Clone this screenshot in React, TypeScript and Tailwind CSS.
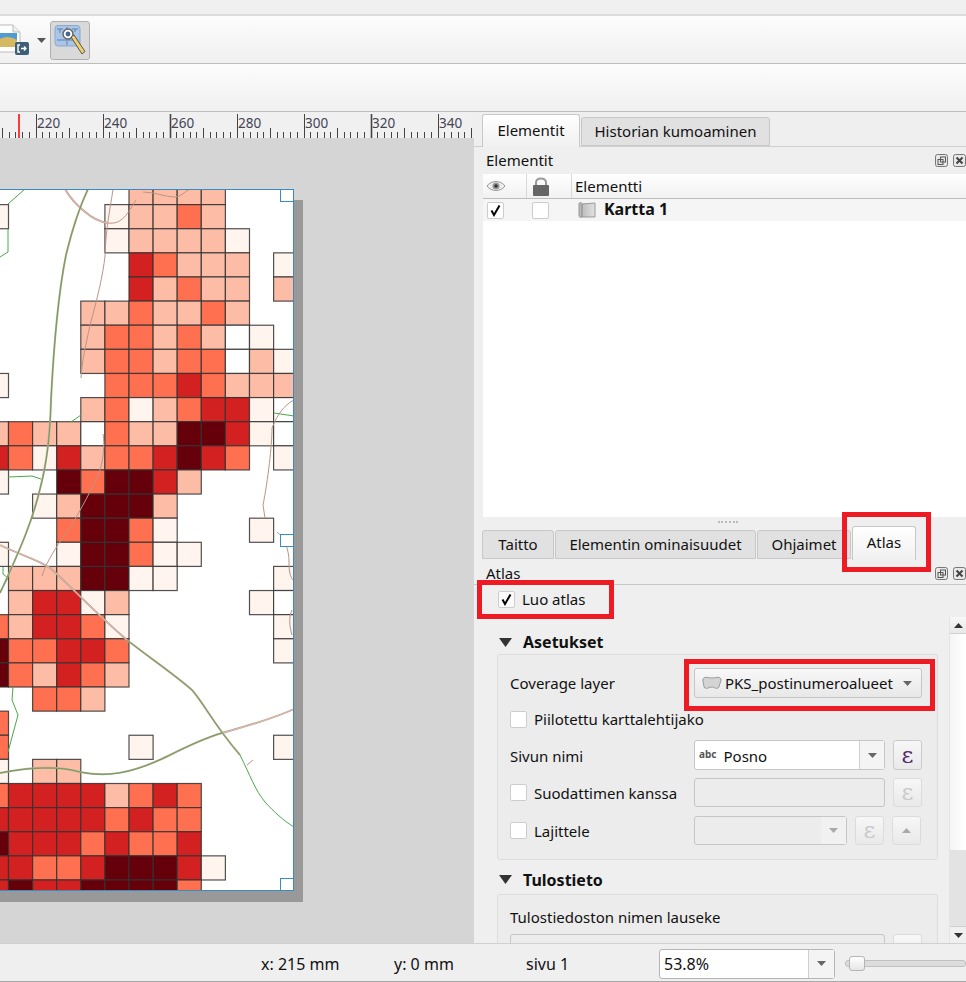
import React from "react";

const rows = [
  "......PPPP...",
  "L....LPPOP...",
  ".....LPPPPL..",
  "......ROPPP.L",
  "......RPOPP.P",
  "....PPOPPOP..",
  "....POOPOPWL.",
  "....POOPOOWPL",
  "L....OOOROPPP",
  "....POLPORRLW",
  "POPPWOPPDDRLW",
  "ROLRPOORDRO.L",
  "L..DODDRP....",
  "..LPDDDP.....",
  "...ODDOL...L.",
  "L..LDDOLL....",
  ".PPPDDLL....L",
  ".PRRLP.....LW",
  "OPRROL......L",
  "DOORRO......L",
  "DOPROP.......",
  "..OOP........",
  "O............",
  "O.....L.....L",
  "L.PP.........",
  "ORRRRPORO....",
  "RRRRROROO....",
  "DRRROROOR....",
  "RROORDDDRL...",
  "RDRRDDDDO....",
];
const fills: Record<string, string> = { W: "#ffffff", L: "#fff4ee", P: "#fdbca6", O: "#fe7050", R: "#d32020", D: "#65000b" };

const mainNS = "M88 189C80 206 72 230 66 255C59 290 54 340 51 400C50 440 46 465 41 485C33 520 20 550 0 593";
const diagGreen = "M127 640C150 658 175 675 192 690C205 705 214 725 240 755";
const curveWest = "M0 773C30 767 60 766 80 772C105 777 130 775 170 755C190 745 205 738 222 733";
const greens = [
  "M25 189L8 204",
  "M8 229L8 252L0 257",
  "M71 422L81 415",
  "M8 477L32 476L41 479",
  "M3 567L3 574L8 578L0 592",
  "M13 687L12 700L18 715L8 752",
  "M240 755C250 775 255 790 265 802C274 812 284 821 294 827",
  "M274 413L294 416",
];
const doubles = [
  "M65 189C70 198 78 206 84 211C92 218 100 222 108 223",
  "M0 545C20 555 40 560 50 568C70 585 90 608 127 640",
  "M222 733C240 728 270 720 294 709",
];
const browns = [
  "M108 223C122 225 128 213 136 200",
  "M113 189C111 205 106 225 105 256C103 275 97 300 90 325C86 345 82 360 81 378",
  "M143 192C155 192 165 197 175 197C180 197 186 191 190 189",
  "M103 434C105 445 103 460 100 470C92 490 80 510 72 525C65 535 57 545 50 558C46 565 44 570 42 576",
  "M247 765L253 760",
  "M294 400C284 405 277 415 272 428C272 445 268 480 263 505L265 518",
  "M277 532C285 538 289 550 289 562C289 572 290 576 293 580",
  "M292 610C289 616 289 625 292 635",
];

function Cb({ checked, white }: { checked?: boolean; white?: boolean }) {
  return (
    <span className={`w-[17px] h-[17px] shrink-0 flex items-center justify-center border border-[#cdcdcd] rounded-[2px] ${white ? "bg-white" : "bg-[#fafafa]"}`}>
      {checked && (
        <svg width="13" height="13" viewBox="0 0 13 13">
          <path d="M2.5 6.5L5 11L10.5 1.5" fill="none" stroke="#000" strokeWidth="2" />
        </svg>
      )}
    </span>
  );
}
function Arrow({ up, color = "#666" }: { up?: boolean; color?: string }) {
  return (
    <svg width="9" height="5" viewBox="0 0 9 5" className="shrink-0">
      <path d={up ? "M0 5L4.5 0L9 5Z" : "M0 0L9 0L4.5 5Z"} fill={color} />
    </svg>
  );
}
function Eps({ disabled }: { disabled?: boolean }) {
  return (
    <span className={`h-full w-[29px] shrink-0 flex items-center justify-center rounded-[3px] border bg-gradient-to-b from-[#f7f7f7] to-[#e9e9e9] text-[23px] leading-none font-['DejaVu_Serif',serif] ${disabled ? "text-[#c9c9c9] border-[#dcdcdc]" : "text-[#552c6e] border-[#cbcbcb]"}`}>
      ε
    </span>
  );
}
function Triangle() {
  return (
    <svg width="13" height="9" viewBox="0 0 13 9" className="shrink-0">
      <path d="M0 0L13 0L6.5 9Z" fill="#333" />
    </svg>
  );
}
function Close() {
  return (
    <span className="flex gap-[5px]">
      <svg width="13" height="13" viewBox="0 0 13 13">
        <rect x="0.5" y="0.5" width="12" height="12" rx="2" fill="#e8e8e8" stroke="#777" />
        <rect x="3" y="5.5" width="5" height="5" fill="none" stroke="#555" />
        <rect x="5.5" y="3" width="5" height="5" fill="none" stroke="#555" />
      </svg>
      <svg width="13" height="13" viewBox="0 0 13 13">
        <rect x="0.5" y="0.5" width="12" height="12" rx="2" fill="#e8e8e8" stroke="#777" />
        <path d="M3.5 3.5L9.5 9.5M9.5 3.5L3.5 9.5" stroke="#444" strokeWidth="2" />
      </svg>
    </span>
  );
}
function LayerIcon() {
  return (
    <svg width="20" height="14" viewBox="0 0 20 14" className="shrink-0">
      <path d="M1 3C3 0 7 2 10 2C13 2 17 0 19 3C19.5 6 17 8 17 11C15 14 12 11 10 11C7 11 4 14 2 11C2 8 0.5 6 1 3Z" fill="#d4d4d4" stroke="#999" />
    </svg>
  );
}
function Ruler() {
  const ticks: React.ReactNode[] = [];
  for (let mm = 210; mm <= 350; mm += 2) {
    const x = Math.round(35.5 + (mm - 220) * 3.35) + 0.5;
    const major = mm % 20 === 0;
    const mid = mm % 10 === 0;
    const thick = mm === 260 || mm === 320;
    ticks.push(<line key={mm} x1={x} x2={x} y1={major ? 2 : mid ? 16 : 20} y2={26} stroke="#444" strokeWidth={thick ? 1.6 : 1} />);
  }
  return (
    <svg width="473" height="26" className="block">
      <rect width="473" height="26" fill="#f0f0f0" />
      {ticks}
      <line x1="19" x2="19" y1="2" y2="26" stroke="#f00" strokeWidth="1.5" />
      {[220, 240, 260, 280, 300, 320, 340].map((v) => (
        <text key={v} x={37 + (v - 220) * 3.35} y="16" fontSize="13.5" fill="#445" fontFamily="'Noto Sans',sans-serif">{v}</text>
      ))}
    </svg>
  );
}
function MapArt() {
  return (
    <svg width="294" height="702" viewBox="0 189 294 702" className="block ml-[20px]">
      {rows.map((row, r) =>
        row.split("").map((c, i) =>
          c === "." ? null : (
            <rect key={`${r}-${i}`} x={-15.6 + i * 24.1} y={180.5 + r * 24.12} width="24.1" height="24.12" fill={fills[c]} stroke="#333" strokeOpacity="0.85" strokeWidth="1.2" />
          )
        )
      )}
      {browns.map((d, i) => (
        <path key={i} d={d} fill="none" stroke="#bb9584" strokeWidth="1" />
      ))}
      {greens.map((d, i) => (
        <path key={i} d={d} fill="none" stroke="#4aa84a" strokeWidth="1" />
      ))}
      {doubles.map((d, i) => (
        <g key={i}>
          <path d={d} fill="none" stroke="#bd9a8a" strokeWidth="1.9" />
          <path d={d} fill="none" stroke="#f3e4dd" strokeWidth="0.5" />
        </g>
      ))}
      {[mainNS, diagGreen, curveWest].map((d, i) => (
        <g key={i}>
          <path d={d} fill="none" stroke="#c6a696" strokeWidth="2" />
          <path d={d} fill="none" stroke="#54a451" strokeWidth="0.9" />
        </g>
      ))}
    </svg>
  );
}
function Tab({ label, w, cls }: { label: string; w: string; cls?: string }) {
  return (
    <div className={`${w} flex items-center justify-center rounded-t-[3px] border border-[#c8c8c8] text-[#111] ${cls ?? "h-[29px] bg-[#e1e1e1]"}`}>
      {label}
    </div>
  );
}

export default function App() {
  return (
    <div className="w-[966px] h-[982px] overflow-hidden flex flex-col bg-[#efefef] text-[15px] text-[#111] font-['Noto_Sans',sans-serif]">
      <div className="h-[14px] bg-[#f0f0f0]" />
      <div className="h-[2px] bg-[#dcdcdc]" />
      <div className="h-[48px] bg-gradient-to-b from-[#fcfcfc] to-[#f0f0f0] border-b border-[#bdbdbd] flex items-center overflow-hidden">
        <svg width="32" height="34" viewBox="0 0 32 34" className="shrink-0 mt-[2px]">
          <path d="M-6 1H13L20 8V28H-6Z" fill="#fff" stroke="#bbb" />
          <path d="M13 1V8H20" fill="#eee" stroke="#bbb" />
          <rect x="-4" y="9" width="21" height="14" fill="#4f9bd4" />
          <path d="M-4 17C3 12 10 12 17 16V23H-4Z" fill="#d6b762" />
          <rect x="15" y="18" width="14" height="13" rx="2" fill="#3f5f78" />
          <path d="M20 21H18V28H20M21 24.500H26M24 22.500L26 24.500L24 26.500" fill="none" stroke="#fff" strokeWidth="1.4" />
        </svg>
        <svg width="9" height="5" viewBox="0 0 9 5" className="ml-[5px] mt-[1px] shrink-0"><path d="M0 0L9 0L4.500 5Z" fill="#555" /></svg>
        <div className="ml-[4px] mt-[1px] w-[40px] h-[39px] bg-[#d9d9d9] border border-[#b0b0b0] rounded-[3px] flex items-center justify-center shrink-0">
          <svg width="32" height="32" viewBox="0 0 32 32">
            <rect x="1" y="1.500" width="25" height="20.500" rx="3" fill="#a9c6e8" stroke="#8aa9cc" />
            <path d="M3 5H9M6 5V9M18 5H24M21 5V8M3 16H24M13 3V8M13 17V21" stroke="#5d7fa8" strokeWidth="1" fill="none" />
            <circle cx="14" cy="10" r="5" fill="#fff" stroke="#666" strokeWidth="1.5" />
            <circle cx="14" cy="10" r="2.400" fill="#45678f" />
            <path d="M17 13L28 30L31 27.500L20 11Z" fill="#efd06a" stroke="#555" />
          </svg>
        </div>
      </div>
      <div className="h-[48px] bg-gradient-to-b from-[#fcfcfc] to-[#f0f0f0] border-b border-[#bdbdbd]" />
      <div className="h-[831px] flex">
        <div className="w-[474px] flex flex-col shrink-0">
          <Ruler />
          <div className="flex-1 bg-[#d5d5d5] overflow-hidden">
            <div className="mt-[51px] ml-[-20px] w-[314px] h-[702px] relative bg-white shadow-[9px_11px_0_#999]">
              <MapArt />
              <div className="absolute inset-0 border border-l-0 border-[#3b8ac4]" />
              <span className="absolute right-0 top-0 w-[14px] h-[13px] bg-white border border-[#3b8ac4]" />
              <span className="absolute right-0 top-[345px] w-[14px] h-[13px] bg-white border border-[#3b8ac4]" />
              <span className="absolute right-0 bottom-0 w-[14px] h-[13px] bg-white border border-[#3b8ac4]" />
            </div>
          </div>
        </div>
        <div className="flex-1 flex flex-col relative min-w-0">
          <div className="h-[405px] flex flex-col">
            <div className="h-[35px] pl-[8px] flex items-end gap-[1px] border-b border-[#cfcfcf] shrink-0">
              <Tab label="Elementit" w="w-[98px]" cls="h-[33px] bg-gradient-to-b from-white to-[#f0f0f0] border-b-0 relative top-[1px] pb-[1px]" />
              <Tab label="Historian kumoaminen" w="w-[189px]" />
            </div>
            <div className="h-[27px] pl-[12px] flex items-center justify-between shrink-0">
              <span>Elementit</span>
              <Close />
            </div>
            <div className="ml-[9px] flex-1 bg-white flex flex-col">
              <div className="h-[25px] flex bg-gradient-to-b from-white to-[#f1f1f1] border-b border-[#bdbdbd]">
                <div className="w-[44px] border-r border-[#d8d8d8] flex items-center pl-[3px]">
                  <svg width="20" height="12" viewBox="0 0 20 12"><path d="M1 6C5 0 15 0 19 6C15 12 5 12 1 6Z" fill="#eee" stroke="#999" /><circle cx="10" cy="6" r="3.600" fill="#999" /><circle cx="10" cy="6" r="1.800" fill="#333" /></svg>
                </div>
                <div className="w-[45px] border-r border-[#d8d8d8] flex items-center pl-[6px]">
                  <svg width="16" height="19" viewBox="0 0 16 19"><path d="M3 8V5.500C3 0 13 0 13 5.500V8" fill="none" stroke="#999" strokeWidth="2" /><rect x="0" y="8" width="16" height="11" rx="1" fill="#666" /></svg>
                </div>
                <div className="pl-[3px] flex items-center">Elementti</div>
              </div>
              <div className="h-[22px] flex items-center bg-[#f5f5f5]">
                <span className="ml-[4px]"><Cb checked white /></span>
                <span className="ml-[28px]"><Cb white /></span>
                <svg width="18" height="16" viewBox="0 0 18 16" className="ml-[29px]">
                  <defs><linearGradient id="kg" x1="0" x2="1" y1="0" y2="0"><stop offset="0" stopColor="#b5b5b5" /><stop offset="1" stopColor="#e2e2e2" /></linearGradient></defs>
                  <path d="M1 2C1 0 4 0 4 2L17 1V15L4 15C2 16 1 15 1 13Z" fill="url(#kg)" stroke="#999" />
                  <path d="M4 2V15" stroke="#888" />
                </svg>
                <span className="ml-[8px] font-bold text-[16px] mt-[-2px]">Kartta 1</span>
              </div>
            </div>
          </div>
          <div className="h-[42px] pl-[8px] flex items-end gap-[1px] shrink-0 relative">
            <span className="absolute left-[244px] top-[4px] w-[20px] border-t-2 border-dotted border-[#bbb]" />
            <Tab label="Taitto" w="w-[72px]" />
            <Tab label="Elementin ominaisuudet" w="w-[201px]" />
            <Tab label="Ohjaimet" w="w-[94px]" />
            <Tab label="Atlas" w="w-[64px]" cls="h-[34px] bg-gradient-to-b from-white to-[#f0f0f0] border-b-0 relative top-[1px] pb-[2px]" />
          </div>
          <div className="h-[26px] pt-[3px] pl-[12px] flex items-center justify-between border-b border-[#c8c8c8] shrink-0">
            <span>Atlas</span>
            <Close />
          </div>
          <div className="h-[32px] pl-[24px] pb-[4px] flex items-center gap-[7px] shrink-0">
            <Cb checked />
            <span>Luo atlas</span>
          </div>
          <div className="flex-1 flex min-h-0">
            <div className="flex-1 overflow-hidden pl-[23px] pr-[11px]">
              <div className="h-[37px] pt-[13px] flex items-center gap-[11px] font-bold text-[16px]">
                <span className="ml-[2px]"><Triangle /></span>
                <span>Asetukset</span>
              </div>
              <div className="h-[206px] bg-[#ececec] border border-[#dcdcdc] rounded-[3px] pl-[12px] pt-[13px] pr-[15px] flex flex-col">
                <div className="h-[30px] flex items-center shrink-0">
                  <span className="w-[184px]">Coverage layer</span>
                  <div className="flex-1 h-full flex items-center pl-[7px] pr-[9px] rounded-[3px] border border-[#c6c6c6] bg-gradient-to-b from-[#f8f8f8] to-[#e8e8e8]">
                    <LayerIcon />
                    <span className="ml-[3px] flex-1">PKS_postinumeroalueet</span>
                    <Arrow />
                  </div>
                </div>
                <div className="h-[30px] mt-[6px] flex items-center gap-[7px] shrink-0">
                  <Cb white />
                  <span>Piilotettu karttalehtijako</span>
                </div>
                <div className="h-[30px] mt-[6px] flex items-center shrink-0">
                  <span className="w-[184px] pt-[2px]">Sivun nimi</span>
                  <div className="w-[191px] h-full flex rounded-[3px] border border-[#c6c6c6] bg-white">
                    <span className="flex-1 flex items-center pl-[4px] pt-[2px]">
                      <span className="text-[10px] font-bold text-[#555] mr-[7px] mt-[-4px]">abc</span>
                      Posno
                    </span>
                    <span className="w-[25px] border-l border-[#d0d0d0] bg-[#f4f4f4] flex items-center justify-center"><Arrow /></span>
                  </div>
                  <span className="ml-[8px] h-full flex"><Eps /></span>
                </div>
                <div className="h-[29px] mt-[8px] flex items-center shrink-0">
                  <span className="w-[184px] flex items-center gap-[7px]"><Cb white /><span className="pt-[2px]">Suodattimen kanssa</span></span>
                  <div className="w-[191px] h-full rounded-[3px] border border-[#c6c6c6] bg-[#ececec]" />
                  <span className="ml-[8px] h-full flex"><Eps disabled /></span>
                </div>
                <div className="h-[29px] mt-[9px] flex items-center shrink-0">
                  <span className="w-[184px] flex items-center gap-[7px]"><Cb white /><span className="pt-[2px]">Lajittele</span></span>
                  <div className="w-[153px] h-full flex rounded-[3px] border border-[#c6c6c6] bg-[#ececec]">
                    <span className="flex-1" />
                    <span className="w-[25px] bg-[#f1f1f1] flex items-center justify-center"><Arrow color="#aaa" /></span>
                  </div>
                  <span className="ml-[8px] h-full flex"><Eps disabled /></span>
                  <span className="ml-[8px] h-full w-[29px] flex items-center justify-center rounded-[3px] border border-[#dcdcdc] bg-gradient-to-b from-[#f7f7f7] to-[#e9e9e9]"><Arrow up color="#aaa" /></span>
                </div>
              </div>
              <div className="h-[34px] pt-[5px] flex items-center gap-[11px] font-bold text-[16px]">
                <span className="ml-[2px]"><Triangle /></span>
                <span>Tulostieto</span>
              </div>
              <div className="h-[80px] bg-[#ececec] border border-[#dcdcdc] rounded-[3px] pl-[12px] pt-[10px] pr-[15px]">
                <div className="h-[25px] flex items-center">Tulostiedoston nimen lauseke</div>
                <div className="mt-[4px] h-[30px] flex">
                  <div className="flex-1 rounded-[3px] border border-[#c6c6c6] bg-[#ececec]" />
                  <span className="ml-[8px] h-full flex"><Eps disabled /></span>
                </div>
              </div>
            </div>
            <div className="w-[17px] flex flex-col shrink-0 border-l border-[#e4e4e4] bg-white">
              <div className="h-[17px] bg-gradient-to-b from-[#f8f8f8] to-[#e8e8e8] border-b border-[#d0d0d0] flex items-center justify-center shrink-0"><Arrow up color="#333" /></div>
              <div className="h-[216px] bg-gradient-to-r from-[#f5f5f5] to-white shrink-0" />
              <div className="flex-1 bg-[#e3e3e3]" />
              <div className="h-[17px] bg-[#f0f0f0] border-t border-[#d0d0d0] flex items-center justify-center shrink-0"><Arrow color="#333" /></div>
            </div>
          </div>
          <span className="absolute left-[368px] top-[400px] w-[89px] h-[60px] border-[5px] border-[#ed1c24]" />
          <span className="absolute left-[3px] top-[468px] w-[137px] h-[39px] border-[5px] border-[#ed1c24]" />
          <span className="absolute left-[210px] top-[547px] w-[251px] h-[52px] border-[5px] border-[#ed1c24]" />
        </div>
      </div>
      <div className="h-[39px] shrink-0 border-t border-[#d0d0d0] border-b border-b-[#a8a8a8] pl-[261px] pt-[2px] flex items-center text-[16px]">
        <span className="w-[133px]">x: 215 mm</span>
        <span className="w-[132px]">y: 0 mm</span>
        <span className="w-[133px]">sivu 1</span>
        <div className="w-[176px] h-[30px] flex rounded-[3px] border border-[#b5b5b5] bg-white">
          <span className="flex-1 flex items-center pl-[4px]">53.8%</span>
          <span className="w-[26px] border-l border-[#d0d0d0] bg-[#f4f4f4] flex items-center justify-center"><Arrow /></span>
        </div>
        <div className="ml-[10px] flex-1 h-[15px] relative flex items-center">
          <div className="w-full h-[7px] rounded-[3px] bg-[#dcdcdc] border border-[#c0c0c0]" />
          <span className="absolute left-[4px] top-0 w-[16px] h-[15px] rounded-[3px] border border-[#b5b5b5] bg-gradient-to-b from-white to-[#e6e6e6]" />
        </div>
      </div>
    </div>
  );
}
